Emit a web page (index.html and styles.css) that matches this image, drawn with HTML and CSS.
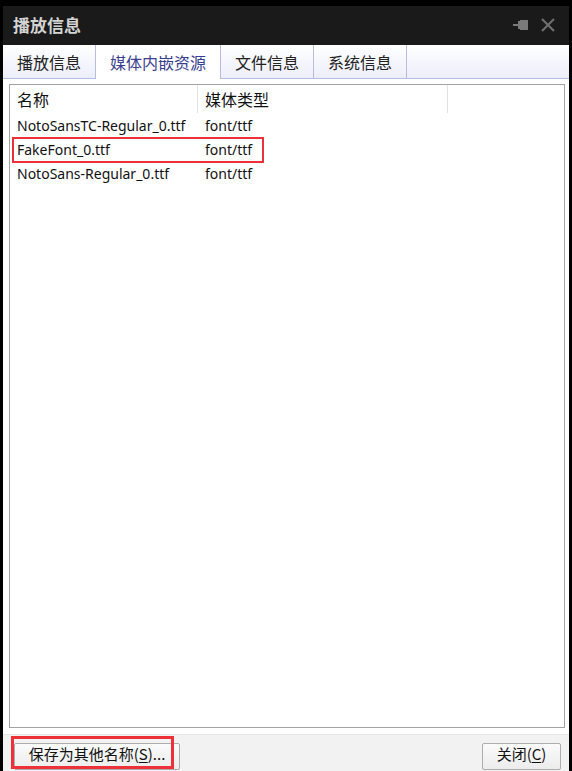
FILE: index.html
```html
<!DOCTYPE html>
<html lang="zh">
<head>
<meta charset="utf-8">
<title>播放信息</title>
<link rel="stylesheet" href="styles.css">
</head>
<body>
<div class="window">
  <div class="titlebar">
    <span class="title">播放信息</span>
    <div class="controls">
      <svg class="pin" width="16" height="12" viewBox="0 0 16 12">
        <rect x="0" y="5" width="6" height="2" fill="#7a7a7a"/>
        <rect x="5" y="2" width="2" height="8" fill="#7a7a7a"/>
        <rect x="7" y="1" width="8" height="10" fill="#7a7a7a"/>
      </svg>
      <svg class="close" width="14" height="14" viewBox="0 0 14 14">
        <path d="M1 1L13 13M13 1L1 13" stroke="#6e6e6e" stroke-width="2.2" fill="none"/>
      </svg>
    </div>
  </div>
  <div class="tabs">
    <div class="tab">播放信息</div>
    <div class="tab active">媒体内嵌资源</div>
    <div class="tab">文件信息</div>
    <div class="tab">系统信息</div>
  </div>
  <div class="body">
    <div class="list">
      <div class="row header">
        <div class="cell c1">名称</div>
        <div class="cell c2">媒体类型</div>
        <div class="cell c3"></div>
      </div>
      <div class="row">
        <div class="cell c1">NotoSansTC-Regular_0.ttf</div>
        <div class="cell c2">font/ttf</div>
      </div>
      <div class="row">
        <div class="cell c1">FakeFont_0.ttf</div>
        <div class="cell c2">font/ttf</div>
      </div>
      <div class="row">
        <div class="cell c1">NotoSans-Regular_0.ttf</div>
        <div class="cell c2">font/ttf</div>
      </div>
      <div class="mark mark-row"></div>
    </div>
  </div>
  <div class="footer">
    <button class="btn btn-save">保存为其他名称(<u>S</u>)...</button>
    <button class="btn btn-close">关闭(<u>C</u>)</button>
    <div class="mark mark-btn"></div>
  </div>
</div>
</body>
</html>
```
FILE: styles.css
```css
html, body {
  margin: 0;
  padding: 0;
  background: #000;
}
body {
  width: 572px;
  height: 771px;
  overflow: hidden;
  font-family: "Noto Sans", "Noto Sans CJK SC", sans-serif;
}
.window {
  margin: 6px 3px 0 3px;
  width: 566px;
  height: 765px;
  background: #fff;
  display: flex;
  flex-direction: column;
}
.titlebar {
  height: 39px;
  flex: none;
  background: #1a1a1a;
  display: flex;
  align-items: center;
  justify-content: space-between;
  padding: 0 14px 0 10px;
}
.title {
  color: #d4d4d4;
  font-family: "Noto Sans CJK SC", sans-serif;
  font-weight: bold;
  font-size: 17px;
  line-height: 20px;
  margin-top: -2px;
}
.controls {
  display: flex;
  align-items: center;
  gap: 12px;
  margin-top: -1px;
}
.tabs {
  height: 34px;
  flex: none;
  box-sizing: border-box;
  display: flex;
  border-bottom: 1px solid #b6bde0;
  background: linear-gradient(#ffffff, #eceefb);
}
.tab {
  display: flex;
  align-items: center;
  padding: 0 14px 0 14px;
  border-right: 1px solid #b6bde0;
  font-family: "Noto Sans CJK SC", sans-serif;
  font-size: 16px;
  color: #222;
  height: 33px;
  box-sizing: border-box;
}
.tab.active {
  background: #fff;
  height: 34px;
  color: #3a3e8e;
}
.body {
  flex: 1;
  padding: 5px 4px 0 6px;
  display: flex;
  flex-direction: column;
}
.list {
  position: relative;
  flex: 1;
  border: 1px solid #a3a3a3;
  background: #fff;
}
.row {
  display: flex;
  height: 24px;
  align-items: center;
  font-size: 14px;
  color: #111;
}
.row.header {
  height: 28px;
  align-items: stretch;
}
.row.header .cell {
  display: flex;
  align-items: center;
  font-family: "Noto Sans CJK SC", sans-serif;
  font-size: 16px;
  border-right: 1px solid #e3e3e3;
  padding-bottom: 1px;
}
.cell {
  box-sizing: border-box;
  padding-left: 7px;
  white-space: nowrap;
}
.c1 { width: 188px; }
.c2 { width: 250px; }
.c3 { width: 100px; border-right: none !important; }
.mark {
  position: absolute;
  border: 2.5px solid #ee3038;
  box-sizing: border-box;
}
.mark-row {
  left: 2px;
  top: 52px;
  width: 252px;
  height: 26px;
}
.footer {
  position: relative;
  flex: none;
  box-sizing: border-box;
  height: 37px;
  margin-top: 6px;
  border-top: 1px solid #e4e4e4;
  background: #f2f2f2;
  display: flex;
  justify-content: space-between;
  align-items: flex-start;
  padding: 8px 8px 0 11px;
}
.btn {
  height: 27px;
  box-sizing: border-box;
  border: 1px solid #adadad;
  border-radius: 2px;
  background: linear-gradient(#fbfbfb, #ececec);
  font-family: "Noto Sans CJK SC", sans-serif;
  font-size: 15px;
  line-height: 18px;
  color: #111;
  padding: 0 0 6px 0;
  margin: 0;
}
.btn u { text-decoration: underline; text-underline-offset: 2px; }
.btn-save { width: 166px; }
.btn-close { width: 79px; }
.mark-btn {
  left: 8px;
  top: 1px;
  width: 163px;
  height: 33px;
  border-width: 3px;
}
```
